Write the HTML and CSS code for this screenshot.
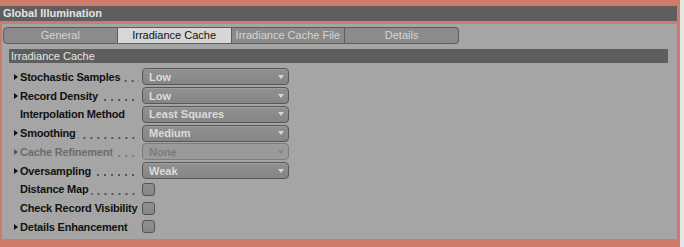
FILE: index.html
```html
<!DOCTYPE html>
<html lang="en">
<head>
  <meta charset="UTF-8" />
  <title>Global Illumination</title>
  <link rel="stylesheet" href="styles.css">
</head>
<body>

  <div class="window">
    <div class="main">
      <div class="title">Global Illumination</div>

      <div class="panel">
        <div class="tabs">
          <div class="tab">General</div>
          <div class="tab active">Irradiance Cache</div>
          <div class="tab">Irradiance Cache File</div>
          <div class="tab">Details</div>
        </div>

        <div class="section">Irradiance Cache</div>

        <div class="rows">
          <div class="row">
            <div class="label"><span class="arrow"></span><span class="name">Stochastic Samples</span><span class="dots"></span></div>
            <div class="select"><span>Low</span><span class="caret"></span></div>
          </div>
          <div class="row">
            <div class="label"><span class="arrow"></span><span class="name">Record Density</span><span class="dots"></span></div>
            <div class="select"><span>Low</span><span class="caret"></span></div>
          </div>
          <div class="row">
            <div class="label"><span class="arrow none"></span><span class="name">Interpolation Method</span></div>
            <div class="select"><span>Least Squares</span><span class="caret"></span></div>
          </div>
          <div class="row">
            <div class="label"><span class="arrow"></span><span class="name">Smoothing</span><span class="dots"></span></div>
            <div class="select"><span>Medium</span><span class="caret"></span></div>
          </div>
          <div class="row disabled">
            <div class="label"><span class="arrow"></span><span class="name">Cache Refinement</span><span class="dots"></span></div>
            <div class="select"><span>None</span><span class="caret"></span></div>
          </div>
          <div class="row">
            <div class="label"><span class="arrow"></span><span class="name">Oversampling</span><span class="dots"></span></div>
            <div class="select"><span>Weak</span><span class="caret"></span></div>
          </div>
          <div class="row">
            <div class="label"><span class="arrow none"></span><span class="name">Distance Map</span><span class="dots"></span></div>
            <div class="check"></div>
          </div>
          <div class="row">
            <div class="label"><span class="arrow none"></span><span class="name">Check Record Visibility</span></div>
            <div class="check"></div>
          </div>
          <div class="row">
            <div class="label"><span class="arrow"></span><span class="name">Details Enhancement</span></div>
            <div class="check"></div>
          </div>
        </div>
      </div>
    </div>
    <div class="edge"></div>
  </div>

</body>
</html>
```

FILE: styles.css
```css
body {
  margin: 0;
  background-color: #ce7b69;
  font-family: "Liberation Sans", Arial, sans-serif;
  font-size: 11px;
}

.window {
  display: flex;
  height: 247px;
}

.main {
  width: 677px;
  padding-top: 6px;
}

.edge {
  width: 4px;
  margin-left: 3px;
  background-color: #e6e6e6;
}

.title {
  height: 15px;
  line-height: 15px;
  padding-left: 3px;
  background-color: #5e5e5e;
  color: #e4e4e4;
  font-weight: bold;
}

.panel {
  margin: 3px 0 0 2px;
  height: 215px;
  background-color: #a5a5a5;
  overflow: hidden;
}

/* tabs */
.tabs {
  display: flex;
  width: 456px;
  margin: 3px 0 0 1px;
}

.tab {
  flex: 1;
  height: 15px;
  line-height: 15px;
  text-align: center;
  background-color: #8b8b8b;
  color: #d4d4d4;
  border: 1px solid #5c5c5c;
  border-left: none;
}

.tab:first-child {
  border-left: 1px solid #5c5c5c;
  border-radius: 4px 0 0 4px;
}

.tab:last-child {
  border-radius: 0 4px 4px 0;
}

.tab.active {
  background-color: #d7d7d7;
  color: #111;
}

.section {
  margin: 5px 9px 0 7px;
  height: 14px;
  line-height: 14px;
  padding-left: 2px;
  background-color: #5e5e5e;
  color: #e6e6e6;
}

/* parameter rows */
.rows {
  padding: 4.5px 0 0 12px;
}

.row {
  display: flex;
  align-items: center;
  height: 18.75px;
}

.label {
  width: 128px;
  display: flex;
  align-items: center;
}

.arrow {
  width: 0;
  height: 0;
  margin-right: 2px;
  border-left: 4px solid #111;
  border-top: 3.5px solid transparent;
  border-bottom: 3.5px solid transparent;
}

.arrow.none {
  border-left-color: transparent;
}

.name {
  font-weight: bold;
  color: #111;
  white-space: nowrap;
  letter-spacing: -0.2px;
}

.dots {
  flex: 1;
  height: 2px;
  margin: 9px 3px 0 2px;
  background-image: linear-gradient(to right, #555 2px, transparent 2px);
  background-size: 7px 2px;
  background-position: right top;
  background-repeat: repeat-x;
}

.select {
  display: flex;
  align-items: center;
  box-sizing: border-box;
  width: 147px;
  height: 17px;
  padding-left: 6px;
  border: 1px solid #575757;
  border-radius: 4px;
  background: linear-gradient(#919191, #858585);
  box-shadow: inset 0 1px rgba(255, 255, 255, 0.12);
  color: #dcdcdc;
  font-weight: bold;
}

.caret {
  margin-left: auto;
  margin-right: 4px;
  width: 0;
  height: 0;
  border-top: 4px solid #d6d6d6;
  border-left: 3.5px solid transparent;
  border-right: 3.5px solid transparent;
}

.row.disabled .name {
  color: #6c6c6c;
}

.row.disabled .dots {
  background-image: linear-gradient(to right, #7a7a7a 2px, transparent 2px);
}

.row.disabled .arrow {
  border-left-color: #555;
}

.row.disabled .select {
  background: #9a9a9a;
  border-color: #7d7d7d;
  color: #7a7a7a;
  box-shadow: none;
}

.row.disabled .caret {
  border-top-color: #888;
}

.check {
  box-sizing: border-box;
  width: 13px;
  height: 13px;
  border: 1px solid #545454;
  border-radius: 3px;
  background: linear-gradient(#919191, #868686);
}
```
